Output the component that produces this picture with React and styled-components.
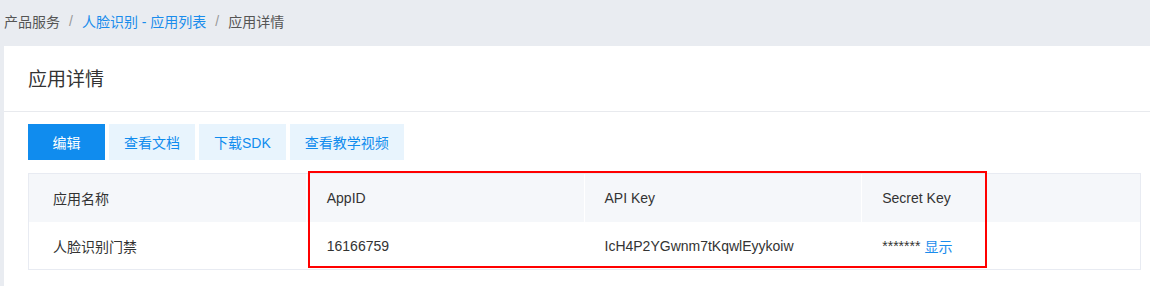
import React from 'react'
import styled, { createGlobalStyle } from "styled-components";

const GlobalStyle = createGlobalStyle`
  html, body {
    margin: 0;
    padding: 0;
    background: #e9ecf1;
    font-family: "Liberation Sans", Arial, "Noto Sans CJK SC", sans-serif;
    color: #333;
    overflow: hidden;
  }
`;

const Page = styled.div`
  width: 1150px;
  height: 286px;
  padding-left: 4px;
  box-sizing: border-box;
`;

const Breadcrumb = styled.div`
  height: 46px;
  display: flex;
  align-items: center;
  padding-bottom: 4px;
  box-sizing: border-box;
  font-size: 14px;
  color: #555;
`;

const Crumb = styled.span`
  color: ${(p) => (p.link ? "#1a8cec" : "#555")};
`;

const Sep = styled.span`
  color: #999;
  padding: 0 9px;
`;

const Card = styled.div`
  background: #fff;
  height: 240px;
`;

const CardHeader = styled.div`
  height: 66px;
  border-bottom: 1px solid #e8eaee;
  display: flex;
  align-items: center;
  padding: 0 24px;
  padding-bottom: 2px;
  box-sizing: border-box;
`;

const Title = styled.h2`
  margin: 0;
  font-size: 19px;
  font-weight: normal;
  color: #333;
`;

const Body = styled.div`
  padding: 12px 9px 0 24px;
`;

const Toolbar = styled.div`
  display: flex;
  gap: 4px;
  margin-bottom: 13px;
`;

const Button = styled.button`
  height: 36px;
  min-width: ${(p) => (p.primary ? "77px" : "auto")};
  padding: 0 15px;
  border: none;
  font-family: inherit;
  font-size: 14px;
  cursor: pointer;
  background: ${(p) => (p.primary ? "#108cee" : "#e8f4fd")};
  color: ${(p) => (p.primary ? "#fff" : "#108cee")};
`;

const TableWrap = styled.div`
  position: relative;
`;

const Table = styled.div`
  border: 1px solid #e8ebf2;
  display: grid;
  grid-template-columns: repeat(4, 1fr);
`;

const HeadCell = styled.div`
  height: 48px;
  display: flex;
  align-items: center;
  padding-left: ${(p) => (p.first ? "24px" : "20px")};
  background: #f5f7fa;
  border-right: 1px solid ${(p) => (p.last ? "transparent" : "#fff")};
  font-size: 14px;
  color: #333;
`;

const Cell = styled.div`
  height: 47px;
  display: flex;
  align-items: center;
  padding-left: ${(p) => (p.first ? "24px" : "20px")};
  font-size: 14px;
  color: #333;
`;

const ShowLink = styled.a`
  color: #1a8cec;
  margin-left: 4px;
  cursor: pointer;
`;

const Highlight = styled.div`
  position: absolute;
  left: 280px;
  top: -2px;
  width: 679px;
  height: 97px;
  border: 2px solid #ff0000;
  box-sizing: border-box;
  pointer-events: none;
`;

const App = () => {
  return (
    <Page>
      <GlobalStyle />
      <Breadcrumb>
        <Crumb>产品服务</Crumb>
        <Sep>/</Sep>
        <Crumb link>人脸识别 - 应用列表</Crumb>
        <Sep>/</Sep>
        <Crumb>应用详情</Crumb>
      </Breadcrumb>
      <Card>
        <CardHeader>
          <Title>应用详情</Title>
        </CardHeader>
        <Body>
          <Toolbar>
            <Button primary>编辑</Button>
            <Button>查看文档</Button>
            <Button>下载SDK</Button>
            <Button>查看教学视频</Button>
          </Toolbar>
          <TableWrap>
            <Table>
              <HeadCell first>应用名称</HeadCell>
              <HeadCell>AppID</HeadCell>
              <HeadCell>API Key</HeadCell>
              <HeadCell last>Secret Key</HeadCell>
              <Cell first>人脸识别门禁</Cell>
              <Cell>16166759</Cell>
              <Cell>IcH4P2YGwnm7tKqwlEyykoiw</Cell>
              <Cell>
                *******<ShowLink>显示</ShowLink>
              </Cell>
            </Table>
            <Highlight />
          </TableWrap>
        </Body>
      </Card>
    </Page>
  )
}

export default App
